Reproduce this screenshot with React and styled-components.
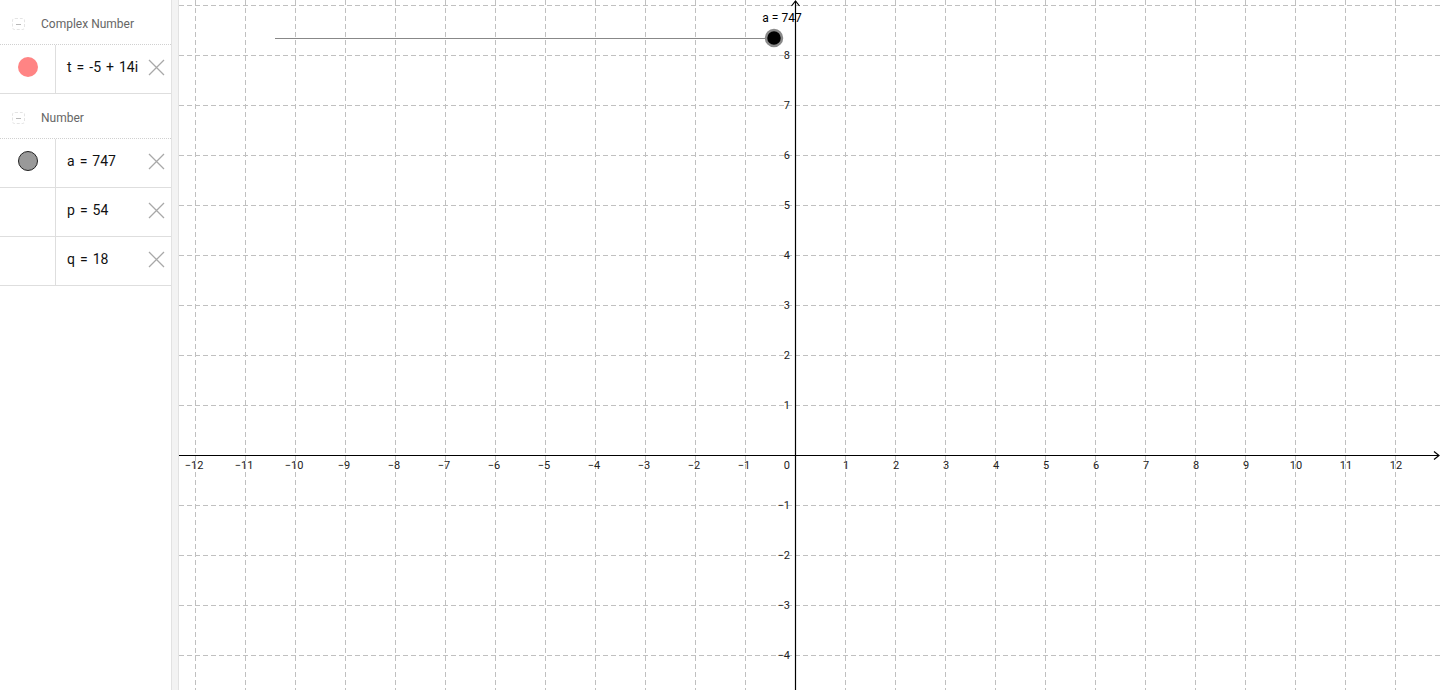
import React from "react";
import styled, { createGlobalStyle } from "styled-components";

const Global = createGlobalStyle`
  html, body { margin: 0; padding: 0; background: #fff; }
  body { font-family: Roboto, "Liberation Sans", sans-serif; overflow: hidden; }
`;

const Page = styled.div`
  display: flex;
  width: 1440px;
  height: 690px;
  overflow: hidden;
`;

const Panel = styled.div`
  width: 171px;
  flex: none;
  display: flex;
  flex-direction: column;
  background: #fff;
`;

const Divider = styled.div`
  width: 6px;
  flex: none;
  background: #f3f3f3;
  border-left: 1px solid #e2e2e2;
  border-right: 1px solid #e2e2e2;
`;

const Graphics = styled.div`
  flex: 1;
  background: #fff;
`;

const GroupHeader = styled.div`
  height: 45px;
  box-sizing: border-box;
  padding-top: 4px;
  display: flex;
  align-items: center;
  border-bottom: 1px dotted #d0d0d0;
  color: #666;
  font-size: 12px;
`;

const Toggle = styled.span`
  width: 11px;
  height: 10px;
  margin: 0 16px 0 12px;
  border: 1px dashed #e4e4e4;
  border-radius: 3px;
  display: flex;
  align-items: center;
  justify-content: center;
  &::after {
    content: "";
    width: 5px;
    border-top: 1px solid #b8b8b8;
  }
`;

const Row = styled.div`
  height: 48px;
  display: flex;
  border-bottom: 1px solid #dedede;
`;

const Marble = styled.div`
  width: 56px;
  flex: none;
  border-right: 1px solid #dedede;
  display: flex;
  align-items: center;
  justify-content: center;
  padding-bottom: 4px;
  box-sizing: border-box;
`;

const Dot = styled.span`
  width: ${(p) => (p.$border ? 18 : 20)}px;
  height: ${(p) => (p.$border ? 18 : 20)}px;
  border-radius: 50%;
  background: ${(p) => p.$color};
  border: ${(p) => (p.$border ? "1px solid #222" : "none")};
`;

const Value = styled.div`
  flex: 1;
  display: flex;
  align-items: center;
  padding: 0 0 5px 11px;
  font-size: 14px;
  color: #111;
  white-space: nowrap;
  position: relative;
`;

const Close = styled.svg`
  position: absolute;
  right: 6px;
  top: 14px;
`;

const Op = styled.span`
  margin: 0 5px;
`;

function CloseIcon() {
  return (
    <Close width="17" height="17" viewBox="0 0 17 17">
      <path d="M1 1 L16 16 M16 1 L1 16" stroke="#a8a8a8" strokeWidth="1.3" fill="none" />
    </Close>
  );
}

function Item({ dot, name, children }) {
  return (
    <Row>
      <Marble>{dot}</Marble>
      <Value>
        {name}<Op>=</Op>{children}
        <CloseIcon />
      </Value>
    </Row>
  );
}

const W = 1262;
const H = 690;
const OX = 616;
const OY = 455;
const U = 50;

function Plane() {
  const xs = [];
  for (let k = -12; k <= 12; k++) xs.push(k);
  const ys = [];
  for (let k = -4; k <= 9; k++) ys.push(k);
  const fmt = (n) => (n < 0 ? "\u2212" + Math.abs(n) : String(n));
  return (
    <svg width={W} height={H} style={{ display: "block" }}>
      <g stroke="#c0c0c0" strokeWidth="1" strokeDasharray="5 3" fill="none">
        {xs.filter((k) => k !== 0).map((k) => (
          <line key={"vx" + k} x1={OX + k * U + 0.5} y1={0} x2={OX + k * U + 0.5} y2={H} />
        ))}
        {ys.filter((k) => k !== 0).map((k) => (
          <line key={"hy" + k} x1={0} y1={OY - k * U + 0.5} x2={W} y2={OY - k * U + 0.5} />
        ))}
      </g>
      <g stroke="#000" strokeWidth="1.2" fill="none">
        <line x1={0} y1={OY + 0.5} x2={W - 2} y2={OY + 0.5} />
        <path d={`M${W - 7} ${OY - 3.5} L${W - 2} ${OY + 0.5} L${W - 7} ${OY + 4.5}`} />
        <line x1={OX + 0.5} y1={1} x2={OX + 0.5} y2={H} />
        <path d={`M${OX - 3.5} ${6} L${OX + 0.5} ${1} L${OX + 4.5} ${6}`} />
      </g>
      <g fontFamily="Roboto, 'Liberation Sans', sans-serif" fontSize="11" fill="#222">
        {xs.filter((k) => k !== 0).map((k) => (
          <text key={"lx" + k} x={OX + k * U + (k < 0 ? -1 : 1)} y={OY + 14} textAnchor="middle">
            {fmt(k)}
          </text>
        ))}
        <text x={OX - 5} y={OY + 14} textAnchor="end">0</text>
        {ys.filter((k) => k !== 0 && k < 9).map((k) => (
          <text key={"ly" + k} x={OX - 5} y={OY - k * U + 4} textAnchor="end">
            {fmt(k)}
          </text>
        ))}
      </g>
      <line x1={96} y1={38.5} x2={595} y2={38.5} stroke="#888" strokeWidth="1" />
      <circle cx={595} cy={38} r={8} fill="#000" stroke="#8a8a8a" strokeWidth="2.5" />
      <text x={603} y={22} textAnchor="middle" fontFamily="Roboto, 'Liberation Sans', sans-serif" fontSize="12" fill="#000">
        a = 747
      </text>
    </svg>
  );
}

export default function App() {
  return (
    <>
      <Global />
      <Page>
        <Panel>
          <GroupHeader>
            <Toggle />
            Complex Number
          </GroupHeader>
          <Item dot={<Dot $color="#ff8484" />} name="t">
            -5<Op>+</Op>14i
          </Item>
          <GroupHeader>
            <Toggle />
            Number
          </GroupHeader>
          <Item dot={<Dot $color="#999" $border />} name="a">747</Item>
          <Item name="p">54</Item>
          <Item name="q">18</Item>
        </Panel>
        <Divider />
        <Graphics>
          <Plane />
        </Graphics>
      </Page>
    </>
  );
}
